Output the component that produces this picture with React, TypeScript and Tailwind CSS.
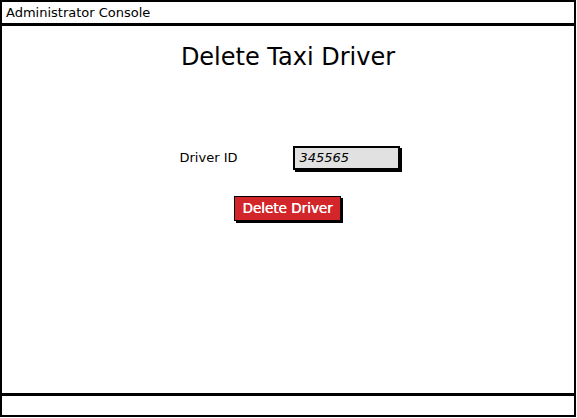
export default function App() {
  return (
    <div className="h-[418px] w-[577px] bg-white font-['DejaVu_Sans',sans-serif] text-black">
      <div className="flex h-[417px] w-[576px] flex-col border-2 border-black">
        <div className="flex h-[24px] items-center border-b-[3px] border-black pl-[4px] text-[13px]">
          Administrator Console
        </div>
        <div className="flex flex-1 flex-col items-center">
          <h1 className="mt-[16px] text-[24px] leading-[30px]">Delete Taxi Driver</h1>
          <div className="mt-[74px] flex items-center">
            <span className="w-[116px] pl-[3px] text-[13px]">Driver ID</span>
            <div className="flex h-[24px] w-[107px] items-center border-2 border-black bg-[#e1e1e1] pl-[5px] text-[13px] italic shadow-[2px_2px_0_#000]">
              345565
            </div>
          </div>
          <button className="mt-[26px] ml-[-1px] h-[25px] w-[107px] border-[1.5px] border-black bg-[#d3262b] text-[13.5px] text-white shadow-[2px_2px_0_#000] [text-shadow:0.4px_0_0_#fff]">
            Delete Driver
          </button>
        </div>
        <div className="h-[22px] border-t-[3px] border-black"></div>
      </div>
    </div>
  );
}
